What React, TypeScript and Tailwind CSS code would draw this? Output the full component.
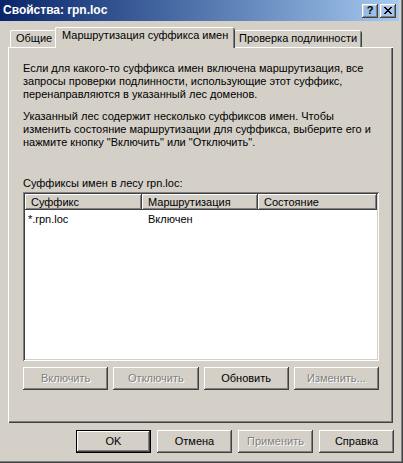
import React from 'react';

const raised =
  'shadow-[inset_-1px_-1px_#404040,inset_1px_1px_#ffffff,inset_-2px_-2px_#808080,inset_2px_2px_#d4d0c8]';
const defRaised =
  'shadow-[inset_0_0_0_1px_#000000,inset_-2px_-2px_#404040,inset_2px_2px_#ffffff,inset_-3px_-3px_#808080]';
const disabledText = 'text-[#808080] [text-shadow:1px_1px_0_#ffffff]';

const Button: React.FC<{ label: string; disabled?: boolean; isDefault?: boolean; className?: string }> = ({
  label,
  disabled,
  isDefault,
  className,
}) => (
  <div
    className={`h-[23px] flex items-center justify-center bg-[#d4d0c8] ${isDefault ? defRaised : raised} ${
      disabled ? disabledText : 'text-black'
    } ${className ?? ''}`}
  >
    {label}
  </div>
);

const Tab: React.FC<{ label: string; active?: boolean; className?: string }> = ({ label, active, className }) => (
  <div
    className={`bg-[#d4d0c8] rounded-t-[2px] shadow-[inset_1px_0_#ffffff,inset_0_1px_#ffffff,inset_-1px_0_#404040,inset_-2px_0_#808080] ${
      active ? 'relative z-10 -mx-[2px] -mb-[1px] h-[21px] pt-[2px] pl-[7px]' : 'h-[17px] pt-[2px] pl-[6px]'
    } ${className ?? ''}`}
  >
    {label}
  </div>
);

export default function App() {
  return (
    <div className="w-[403px] h-[463px] bg-[#d4d0c8] flex flex-col pr-[4px] pb-[3px] shadow-[inset_-1px_-1px_#404040,inset_-2px_-2px_#808080] font-['Liberation_Sans',sans-serif] text-[11px] leading-[13px] text-black overflow-hidden">
      {/* title bar */}
      <div className="h-[21px] flex items-center justify-between pl-[3px] pr-[3px] bg-linear-to-r from-[#0a246a] to-[#a6caf0]">
        <span className="font-bold text-white text-[12px]">Свойства: rpn.loc</span>
        <div className="flex gap-[2px]">
          <div className={`w-[16px] h-[14px] flex items-center justify-center font-bold text-[11px] ${raised}`}>?</div>
          <div className={`w-[16px] h-[14px] flex items-center justify-center ${raised}`}>
            <svg width="8" height="7" viewBox="0 0 8 7" shapeRendering="crispEdges">
              <path d="M0 0h2v1H0zM6 0h2v1H6zM1 1h2v1H1zM5 1h2v1H5zM2 2h4v1H2zM3 3h2v1H3zM2 4h4v1H2zM1 5h2v1H1zM5 5h2v1H5zM0 6h2v1H0zM6 6h2v1H6z" fill="#000" />
            </svg>
          </div>
        </div>
      </div>

      {/* tabs */}
      <div className="flex items-end h-[26px] pl-[10px]">
        <Tab label="Общие" className="w-[47px]" />
        <Tab label="Маршрутизация суффикса имен" active className="w-[180px]" />
        <Tab label="Проверка подлинности" className="w-[129px]" />
      </div>

      {/* panel */}
      <div className="ml-[8px] w-[385px] h-[376px] pl-[15px] pt-[15px] shadow-[inset_1px_1px_#ffffff,inset_-1px_-1px_#404040,inset_-2px_-2px_#808080]">
        <p>
          Если для какого-то суффикса имен включена маршрутизация, все
          <br />
          запросы проверки подлинности, использующие этот суффикс,
          <br />
          перенаправляются в указанный лес доменов.
        </p>
        <p className="mt-[9px]">
          Указанный лес содержит несколько суффиксов имен. Чтобы
          <br />
          изменить состояние маршрутизации для суффикса, выберите его и
          <br />
          нажмите кнопку "Включить" или "Отключить".
        </p>
        <p className="mt-[28px]">Суффиксы имен в лесу rpn.loc:</p>

        {/* list view */}
        <div className="mt-[2px] w-[356px] h-[169px] bg-white p-[2px] shadow-[inset_1px_1px_#808080,inset_-1px_-1px_#ffffff,inset_2px_2px_#404040,inset_-2px_-2px_#d4d0c8]">
          <div className="flex h-[16px]">
            <div className={`w-[117px] pl-[6px] flex items-center bg-[#d4d0c8] ${raised}`}>Суффикс</div>
            <div className={`w-[116px] pl-[6px] flex items-center bg-[#d4d0c8] ${raised}`}>Маршрутизация</div>
            <div className={`flex-1 pl-[6px] flex items-center bg-[#d4d0c8] ${raised}`}>Состояние</div>
          </div>
          <div className="flex h-[16px] items-center mt-[1px]">
            <div className="w-[117px] pl-[3px]">*.rpn.loc</div>
            <div className="w-[116px] pl-[6px]">Включен</div>
          </div>
        </div>

        <div className="mt-[6px] w-[356px] grid grid-cols-4 gap-[5px]">
          <Button label="Включить" disabled />
          <Button label="Отключить" disabled />
          <Button label="Обновить" />
          <Button label="Изменить..." disabled />
        </div>
      </div>

      {/* dialog buttons */}
      <div className="mt-[7px] flex justify-end gap-[6px] pr-[5px]">
        <Button label="OK" isDefault className="w-[75px]" />
        <Button label="Отмена" className="w-[75px]" />
        <Button label="Применить" disabled className="w-[75px]" />
        <Button label="Справка" className="w-[75px]" />
      </div>
    </div>
  );
}
